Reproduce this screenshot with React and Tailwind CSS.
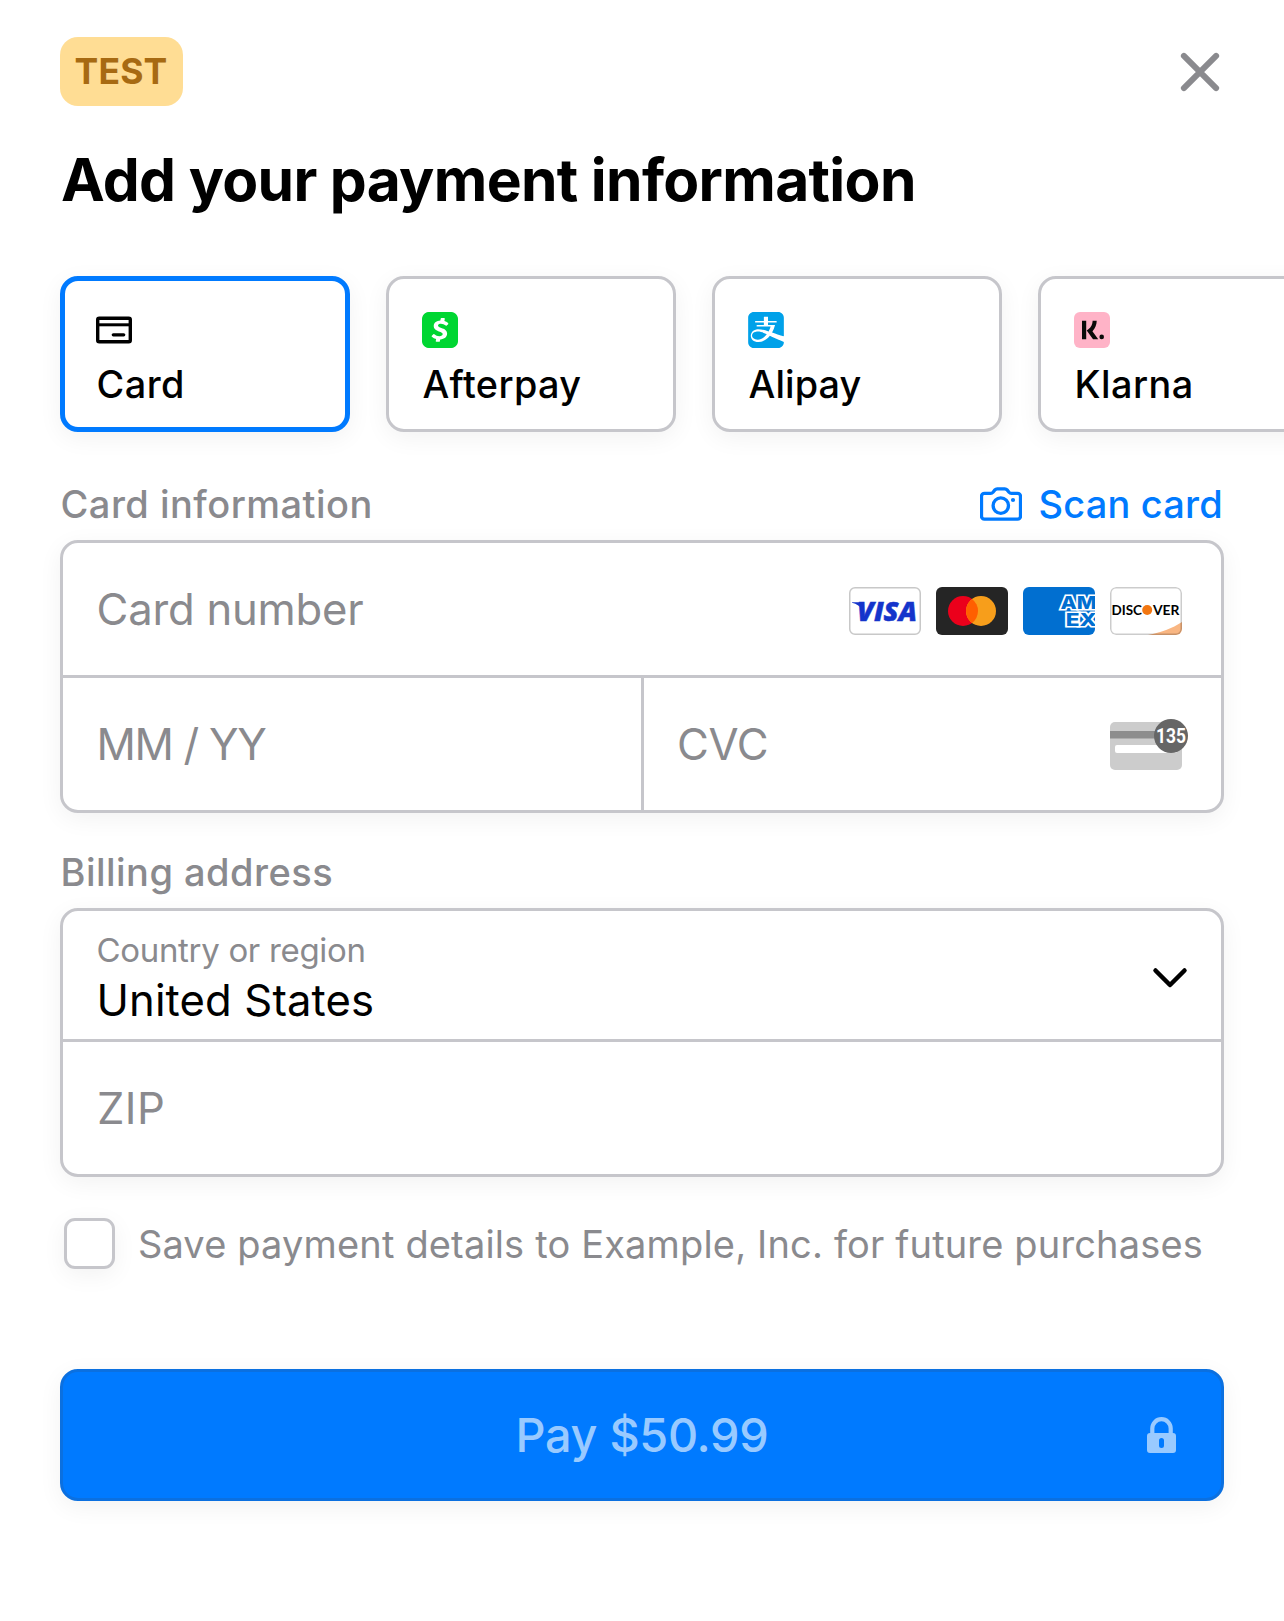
import { SiAlipay, SiCashapp, SiKlarna } from "react-icons/si";

const shadow = "shadow-[0_6px_24px_rgba(0,0,0,0.055)]";

function CardIcon() {
  return (
    <svg viewBox="0 0 36 36" className="size-9" fill="none" stroke="#000" strokeWidth="3.4">
      <rect x="1.700" y="6.200" width="32.600" height="23.600" rx="1.6" />
      <path d="M2 12.800h32" strokeWidth="3" />
      <path d="M17.300 22.800h10.400" strokeWidth="3.3" strokeLinecap="round" />
    </svg>
  );
}

function AfterpayIcon() {
  return (
    <span className="flex size-9 items-center justify-center rounded-[7px] bg-[radial-gradient(white_60%,#00d632_61%)]">
      <SiCashapp className="size-9 text-[#00d632]" />
    </span>
  );
}

function AlipayIcon() {
  return <SiAlipay className="size-9 text-[#00a1e9]" />;
}

function KlarnaIcon() {
  return (
    <span className="flex size-9 items-center justify-center rounded-[6px] bg-[#ffb3c7] pb-px pl-[2px]">
      <SiKlarna className="size-[22px] text-[#0a0b09]" />
    </span>
  );
}

function CameraIcon() {
  return (
    <svg viewBox="0 0 42 34" className="h-[34px] w-[42px]" fill="none" stroke="#007aff" strokeWidth="3.3">
      <path d="M4.5 6.3h6.2c1 0 1.7-.4 2.3-1.1l1.9-2.3c.6-.7 1.4-1.1 2.3-1.1h7.6c.9 0 1.7.4 2.3 1.1L29 5.2c.6.7 1.3 1.1 2.3 1.1h6.2c1.7 0 3 1.3 3 3v19.900c0 1.7-1.3 3-3 3h-33c-1.7 0-3-1.3-3-3V9.3c0-1.7 1.3-3 3-3z" />
      <circle cx="20.8" cy="18.600" r="7.700" />
      <circle cx="33" cy="13" r="2.1" fill="#007aff" stroke="none" />
    </svg>
  );
}

function Visa() {
  return (
    <svg viewBox="0 0 72 48" className="h-12 w-[72px]">
      <rect x=".75" y=".75" width="70.5" height="46.5" rx="5.3" fill="#fff" stroke="#c8c8c8" strokeWidth="1.5" />
      <path d="M3 15.200h9l3 5-1 3C11.500 19.300 7.500 16.700 3 15.700z" fill="#1434cb" />
      <text x="8" y="34.300" textLength="60" lengthAdjust="spacingAndGlyphs" fontFamily="Open Sans" fontWeight="800" fontStyle="italic" fontSize="27" fill="#1434cb" stroke="#1434cb" strokeWidth=".5">VISA</text>
    </svg>
  );
}

function Mastercard() {
  return (
    <svg viewBox="0 0 72 48" className="h-12 w-[72px]">
      <rect width="72" height="48" rx="6" fill="#252525" />
      <circle cx="27" cy="24" r="15" fill="#eb001b" />
      <circle cx="45" cy="24" r="15" fill="#f79e1b" />
      <path d="M36 12a15 15 0 0 1 0 24a15 15 0 0 1 0-24z" fill="#ff5f00" />
    </svg>
  );
}

function Amex() {
  return (
    <svg viewBox="0 0 72 48" className="h-12 w-[72px] rounded-[6px]">
      <rect width="72" height="48" fill="#016fd0" />
      <text fontFamily="Inter" fontWeight="800" fontSize="18" fill="#016fd0" stroke="#fff" strokeWidth="3.200" paintOrder="stroke" strokeLinejoin="miter">
        <tspan x="37.500" y="22.300" textLength="36" lengthAdjust="spacingAndGlyphs">AM</tspan>
        <tspan x="42.800" y="38.700" textLength="31" lengthAdjust="spacingAndGlyphs">EX</tspan>
      </text>
    </svg>
  );
}

function Discover() {
  return (
    <svg viewBox="0 0 72 48" className="h-12 w-[72px] overflow-hidden rounded-[6px]">
      <rect width="72" height="48" fill="#fff" />
      <path d="M38 48C51 45.500 62 41.500 72 35v13z" fill="#f9b682" />
      <rect x=".75" y=".75" width="70.5" height="46.500" rx="5.3" fill="none" stroke="#000" strokeOpacity=".2" strokeWidth="1.5" />
      <g fontFamily="Lato" fontWeight="700" fontSize="14" fill="#000">
        <text x="1.500" y="28.300" textLength="30.500" lengthAdjust="spacingAndGlyphs">DISC</text>
        <text x="43" y="28.300" textLength="26.500" lengthAdjust="spacingAndGlyphs">VER</text>
      </g>
      <circle cx="37.200" cy="23" r="5" fill="#f27712" />
    </svg>
  );
}

function CvcIcon() {
  return (
    <svg viewBox="0 0 80 54" className="mt-[3px] -mr-2 h-[54px] w-[80px]">
      <rect y="3" width="72" height="48" rx="5" fill="#ccc" />
      <rect y="12" width="72" height="7.500" fill="#8d8d8d" />
      <rect x="5" y="26" width="62" height="8" rx="2" fill="#fff" />
      <circle cx="61" cy="17" r="17" fill="#666" />
      <text x="46" y="24" textLength="30" lengthAdjust="spacingAndGlyphs" fontFamily="Roboto" fontWeight="700" fontSize="20" fill="#fff">135</text>
    </svg>
  );
}

const tabs = [
  { name: "Card", Icon: CardIcon, tracking: "tracking-[0.5px]", selected: true },
  { name: "Afterpay", Icon: AfterpayIcon, tracking: "tracking-[0.4px]" },
  { name: "Alipay", Icon: AlipayIcon, tracking: "tracking-[0.1px]" },
  { name: "Klarna", Icon: KlarnaIcon, tracking: "tracking-[0.5px]" },
];

function Tab({ name, Icon, tracking, selected }) {
  return (
    <button
      className={`flex h-[156px] w-[290px] shrink-0 flex-col items-start rounded-[18px] bg-white ${shadow} ${
        selected
          ? "border-[5px] border-[#007aff] pt-[31px] pl-[31px]"
          : "border-[3px] border-[#c6c6cb] pt-[33px] pl-[33px]"
      }`}
    >
      <Icon />
      <span className={`mt-3.5 pl-[0.5px] text-[37.8px] leading-[44px] font-medium text-black ${tracking}`}>{name}</span>
    </button>
  );
}

export default function App() {
  return (
    <main className="min-h-[1621px] w-full overflow-hidden bg-white pt-[37px] pl-[60px] font-['Inter',sans-serif] text-[#8a8a8e]">
      <header className="flex h-[69px] items-center justify-between pr-16">
        <span className="flex h-[69px] w-[123px] items-center justify-center rounded-[18px] bg-[#ffdd94] pr-px text-[35.5px] font-bold tracking-[0.2px] text-[#a76a12]">
          TEST
        </span>
        <button aria-label="Close">
          <svg viewBox="0 0 40 40" className="size-10" fill="none" stroke="#8a8a8e" strokeWidth="6" strokeLinecap="round">
            <path d="M3.900 3.900l32.200 32.200M36.100 3.900L3.900 36.100" />
          </svg>
        </button>
      </header>

      <h1 className="mt-[38px] ml-px text-[58.7px] leading-[72px] font-bold tracking-[-0.68px] text-black">
        Add your payment information
      </h1>

      <nav className="mt-[60px] flex gap-9">
        {tabs.map((tab) => (
          <Tab key={tab.name} {...tab} />
        ))}
      </nav>

      <div className="mr-[60px]">
        <div className="mt-[49px] flex h-[46px] items-center justify-between text-[38px] leading-[46px] font-medium">
          <h2 className="pl-[0.5px] tracking-[0.48px]">Card information</h2>
          <button className="flex items-center gap-[16.500px] pr-px tracking-[0.2px] text-[#007aff]">
            <CameraIcon />
            Scan card
          </button>
        </div>

        <section className={`mt-[13px] rounded-[18px] border-[3px] border-[#c6c6cb] bg-white text-[43.6px] ${shadow}`}>
          <div className="flex h-[135px] items-center justify-between border-b-[3px] border-[#c6c6cb] pr-[39px] pl-[33.500px]">
            <span className="pt-0.5 tracking-[-0.2px]">Card number</span>
            <span className="flex gap-[15px] pt-1">
              <Visa />
              <Mastercard />
              <Amex />
              <Discover />
            </span>
          </div>
          <div className="flex h-[132px]">
            <div className="flex w-[581px] items-center border-r-[3px] border-[#c6c6cb] pt-0.5 pl-[33.500px] tracking-[-1.3px]">
              MM / YY
            </div>
            <div className="flex flex-1 items-center justify-between pr-[39px] pl-[33px]">
              <span className="pt-0.5 tracking-[-0.4px]">CVC</span>
              <CvcIcon />
            </div>
          </div>
        </section>

        <h2 className="mt-9 pl-[0.5px] text-[38px] leading-[46px] font-medium tracking-[0.47px]">Billing address</h2>

        <section className={`mt-[13px] rounded-[18px] border-[3px] border-[#c6c6cb] bg-white text-[43.6px] ${shadow}`}>
          <div className="flex h-[131px] items-center justify-between border-b-[3px] border-[#c6c6cb] pr-[33px] pl-[33.500px]">
            <div className="flex h-[128px] flex-col gap-1.5 pt-[19px]">
              <span className="text-[33px] leading-[40px] tracking-[-0.32px]">Country or region</span>
              <span className="leading-[50px] tracking-[0.12px] text-black">United States</span>
            </div>
            <svg viewBox="0 0 36 22" className="mt-1.5 h-[22px] w-9" fill="none" stroke="#000" strokeWidth="4.500" strokeLinecap="round" strokeLinejoin="round">
              <path d="M3.500 3.500L18 18L32.500 3.500" />
            </svg>
          </div>
          <div className="flex h-[132px] items-center pt-0.5 pl-[34px] tracking-[0.4px]">ZIP</div>
        </section>

        <label className="mt-10 ml-[4.400px] flex h-[51px] items-center gap-[22.500px]">
          <span className={`mt-px size-[51px] shrink-0 rounded-[11px] border-[3px] border-[#c6c6cb] bg-white ${shadow}`} />
          <span className="pt-[3px] text-[38px] leading-[46px] tracking-[0.16px] whitespace-nowrap">
            Save payment details to Example, Inc. for future purchases
          </span>
        </label>

        <button
          className={`mt-[101px] grid h-[132px] w-full grid-cols-[1fr_auto_1fr] items-center rounded-[18px] border-[3px] border-[#0b70e0] bg-[#007aff] px-[45px] text-[#99caff] ${shadow}`}
        >
          <span className="col-start-2 text-[46.8px] font-medium tracking-[-0.3px]">Pay $50.99</span>
          <svg viewBox="0 0 29 36" className="h-9 w-[29px] justify-self-end" fill="none">
            <path d="M5.300 18v-6.600a9.200 9.200 0 0 1 18.400 0V18" stroke="#99caff" strokeWidth="4.200" />
            <path fillRule="evenodd" d="M3 16h23a3 3 0 0 1 3 3v14a3 3 0 0 1-3 3H3a3 3 0 0 1-3-3V19a3 3 0 0 1 3-3zM14.500 21a2.500 2.500 0 0 0-2.500 2.500v5a2.500 2.500 0 0 0 5 0v-5a2.500 2.500 0 0 0-2.500-2.500z" fill="#99caff" />
          </svg>
        </button>
      </div>
    </main>
  );
}
